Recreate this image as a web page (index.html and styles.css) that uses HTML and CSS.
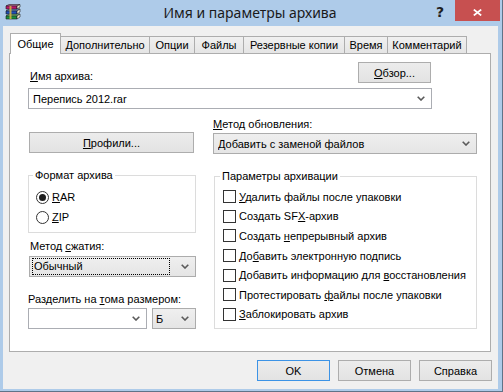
FILE: index.html
```html
<!DOCTYPE html>
<html lang="ru">
<head>
<meta charset="utf-8">
<title>Имя и параметры архива</title>
<link rel="stylesheet" href="styles.css">
</head>
<body>
<div class="window">
  <div class="titlebar">
    <div class="tb-left">
      <svg class="appicon" width="16" height="16" viewBox="0 0 16 16">
        <g stroke="#1c1c1c" stroke-width="0.6" stroke-linejoin="round">
          <path d="M1 12 L4 10 L15 10 L12 12 Z" fill="#86d98c"/>
          <rect x="1" y="12" width="11" height="3" fill="#17903b"/>
          <path d="M12 12 L15 10 L15 13 L12 15 Z" fill="#f4ecd0"/>
          <path d="M1 7 L4 5 L15 5 L12 7 Z" fill="#7fa6ea"/>
          <rect x="1" y="7" width="11" height="3" fill="#1e4fb8"/>
          <path d="M12 7 L15 5 L15 8 L12 10 Z" fill="#f4ecd0"/>
          <path d="M1 2 L4 0.5 L15 0.5 L12 2 Z" fill="#ee86c0"/>
          <rect x="1" y="2" width="11" height="3" fill="#b8186f"/>
          <path d="M12 2 L15 0.5 L15 3 L12 5 Z" fill="#f4ecd0"/>
        </g>
        <rect x="4.5" y="2" width="2" height="13" fill="#d8b640" opacity="0.85"/>
      </svg>
    </div>
    <div class="title">Имя и параметры архива</div>
    <div class="tb-right">
      <span class="help">?</span>
      <span class="close">
        <svg width="9" height="7" viewBox="0 0 9 7"><path d="M0.8 0.6 L8.2 6.4 M8.2 0.6 L0.8 6.4" stroke="#fff" stroke-width="1.8"/></svg>
      </span>
    </div>
  </div>

  <div class="client">
    <div class="tabs">
      <div class="tab active tab-general">Общие</div>
      <div class="tab tab-advanced">Дополнительно</div>
      <div class="tab tab-options">Опции</div>
      <div class="tab tab-files">Файлы</div>
      <div class="tab tab-backup">Резервные копии</div>
      <div class="tab tab-time">Время</div>
      <div class="tab tab-comment">Комментарий</div>
    </div>

    <div class="panel">
      <div class="name-row">
        <span class="lbl lbl-name"><u>И</u>мя архива:</span>
        <span class="btn btn-browse"><u>О</u>бзор...</span>
      </div>
      <div class="combo edit combo-name">
        <span class="val">Перепись 2012.rar</span>
        <svg class="arrow" width="8" height="5" viewBox="0 0 8 5"><path d="M0.7 0.7 L4 4 L7.3 0.7" fill="none" stroke="#5a5a5a" stroke-width="1.6"/></svg>
      </div>

      <div class="cols">
        <div class="col col-left">
          <span class="btn btn-profiles"><u>П</u>рофили...</span>

          <fieldset class="group group-format">
            <legend>Формат архива</legend>
            <div class="opt"><span class="radio checked"></span><span><u>R</u>AR</span></div>
            <div class="opt"><span class="radio"></span><span><u>Z</u>IP</span></div>
          </fieldset>

          <span class="lbl lbl-method">Метод <u>с</u>жатия:</span>
          <div class="combo list combo-method">
            <span class="val focus">Обычный</span>
            <svg class="arrow" width="8" height="5" viewBox="0 0 8 5"><path d="M0.7 0.7 L4 4 L7.3 0.7" fill="none" stroke="#5a5a5a" stroke-width="1.6"/></svg>
          </div>

          <span class="lbl lbl-split">Разделить на <u>т</u>ома размером:</span>
          <div class="split-row">
            <div class="combo edit combo-size">
              <span class="val"></span>
              <svg class="arrow" width="8" height="5" viewBox="0 0 8 5"><path d="M0.7 0.7 L4 4 L7.3 0.7" fill="none" stroke="#5a5a5a" stroke-width="1.6"/></svg>
            </div>
            <div class="combo list combo-unit">
              <span class="val">Б</span>
              <svg class="arrow" width="8" height="5" viewBox="0 0 8 5"><path d="M0.7 0.7 L4 4 L7.3 0.7" fill="none" stroke="#5a5a5a" stroke-width="1.6"/></svg>
            </div>
          </div>
        </div>

        <div class="col col-right">
          <span class="lbl lbl-update"><u>М</u>етод обновления:</span>
          <div class="combo list combo-update">
            <span class="val">Добавить с заменой файлов</span>
            <svg class="arrow" width="8" height="5" viewBox="0 0 8 5"><path d="M0.7 0.7 L4 4 L7.3 0.7" fill="none" stroke="#5a5a5a" stroke-width="1.6"/></svg>
          </div>

          <fieldset class="group group-params">
            <legend>Параметры архивации</legend>
            <div class="opt chk"><span class="box"></span><span><u>У</u>далить файлы после упаковки</span></div>
            <div class="opt chk"><span class="box"></span><span>Создать SF<u>X</u>-архив</span></div>
            <div class="opt chk"><span class="box"></span><span>Создать <u>н</u>епрерывный архив</span></div>
            <div class="opt chk"><span class="box"></span><span>До<u>б</u>авить электронную подпись</span></div>
            <div class="opt chk"><span class="box"></span><span>Добавить информацию для <u>в</u>осстановления</span></div>
            <div class="opt chk"><span class="box"></span><span>Протестировать <u>ф</u>айлы после упаковки</span></div>
            <div class="opt chk"><span class="box"></span><span><u>З</u>аблокировать архив</span></div>
          </fieldset>
        </div>
      </div>
    </div>

    <div class="footer">
      <span class="btn btn-foot default">OK</span>
      <span class="btn btn-foot">Отмена</span>
      <span class="btn btn-foot">Справка</span>
    </div>
  </div>
</div>
</body>
</html>
```

FILE: styles.css
```css
* { box-sizing: border-box; }

html, body {
  margin: 0;
  padding: 0;
}

body {
  width: 503px;
  height: 392px;
  overflow: hidden;
  background: #aecbe9;
  font-family: "Liberation Sans", Arial, sans-serif;
  font-size: 11px;
  color: #000;
}

.window {
  width: 503px;
  height: 392px;
  display: flex;
  flex-direction: column;
  border-right: 1px solid #5f7388;
  border-bottom: 1px solid #5f7388;
}

/* ---------- title bar ---------- */
.titlebar {
  height: 26px;
  flex: none;
  display: grid;
  grid-template-columns: 1fr auto 1fr;
  align-items: start;
  margin-right: 2px;
}

.tb-left {
  padding: 4px 0 0 5px;
}

.appicon { display: block; }

.title {
  font-family: "Noto Sans", "Open Sans", sans-serif;
  font-size: 14px;
  line-height: 26px;
  color: #1a1a1a;
  white-space: nowrap;
}

.tb-right {
  display: flex;
  justify-content: flex-end;
  align-items: flex-start;
}

.help {
  width: 26px;
  padding-right: 4px;
  height: 21px;
  text-align: center;
  font-family: "DejaVu Sans", sans-serif;
  font-weight: bold;
  font-size: 14px;
  line-height: 24px;
  color: #1f1f1f;
}

.close {
  width: 45px;
  height: 21px;
  background: #c75050;
  display: flex;
  justify-content: center;
  padding-top: 9px;
}

.close svg { display: block; }

/* ---------- client ---------- */
.client {
  flex: none;
  height: 363px;
  margin: 0 4px 0 3px;
  background: #f0f0f0;
  display: flex;
  flex-direction: column;
}

.tabs {
  height: 20px;
  margin: 7px 0 0 7px;
  display: flex;
  align-items: flex-end;
  position: relative;
  z-index: 2;
}

.tab {
  flex: none;
  height: 17px;
  margin-left: -1px;
  border: 1px solid #adadad;
  border-bottom: none;
  background: linear-gradient(#f0f0f0, #e5e5e5);
  line-height: 16px;
  text-align: center;
  white-space: nowrap;
}

.tab.active {
  height: 21px;
  margin-left: 0;
  margin-bottom: -1px;
  padding-top: 2px;
  background: #fff;
  position: relative;
  z-index: 3;
}

.tab-general  { width: 51px; }
.tab-advanced { width: 90px; }
.tab-options  { width: 46px; }
.tab-files    { width: 50px; }
.tab-backup   { width: 102px; }
.tab-time     { width: 44px; }
.tab-comment  { width: 80px; }

.panel {
  width: 482px;
  height: 299px;
  margin-left: 6px;
  border: 1px solid #adadad;
  background: #fff;
  padding: 8px 0 0 18px;
  position: relative;
  z-index: 1;
}

.lbl {
  display: block;
  line-height: 14px;
  white-space: nowrap;
}

.name-row {
  width: 404px;
  display: flex;
  justify-content: space-between;
  align-items: flex-end;
}

.lbl-name { margin-left: 2px; }

/* ---------- buttons ---------- */
.btn {
  display: flex;
  align-items: center;
  justify-content: center;
  height: 21px;
  border: 1px solid #adadad;
  background: linear-gradient(#ececec, #e3e3e3);
  line-height: 14px;
  white-space: nowrap;
}

.btn-browse {
  width: 73px;
  margin-right: 1px;
}

.btn-profiles {
  width: 165px;
  margin-left: 1px;
}

.btn-foot { width: 73px; }

.btn.default { border-color: #3c93e6; }

/* ---------- combos ---------- */
.combo {
  height: 21px;
  display: flex;
  align-items: center;
  border: 1px solid #acacac;
  padding: 0 6px 0 4px;
}

.combo.edit {
  background: #fff;
  border-color: #abadb3;
}

.combo.list {
  background: linear-gradient(#efefef, #e5e5e5);
}

.combo .val {
  flex: 1;
  white-space: nowrap;
  overflow: hidden;
  line-height: 14px;
}

.combo .arrow {
  flex: none;
  display: block;
}

.combo-name {
  width: 404px;
  margin-top: 5px;
}

.cols {
  display: flex;
  margin-top: 8px;
}

.col {
  display: flex;
  flex-direction: column;
}

.col-left {
  width: 168px;
  padding-top: 15px;
}

.col-right {
  width: 264px;
  margin-left: 17px;
}

.combo-update {
  margin-top: 2px;
  width: 264px;
}

/* ---------- group boxes ---------- */
.group {
  margin: 0;
  border: 1px solid #dcdcdc;
  min-width: 0;
}

.group legend {
  padding: 0 2px;
  margin-left: -3px;
  line-height: 14px;
  white-space: nowrap;
}

.group-format {
  margin-top: 15px;
  width: 168px;
  padding: 5px 0 5px 7px;
}

.group-format .opt {
  height: 20px;
}

.group-params {
  margin: 15px 0 0 1px;
  width: 263px;
  padding: 4px 0 4px 8px;
}

.group-params .opt {
  height: 19.6px;
}

.opt {
  display: flex;
  align-items: center;
  gap: 3px;
  white-space: nowrap;
}

.radio {
  width: 13px;
  height: 13px;
  border: 1px solid #333;
  border-radius: 50%;
  background: #fff;
  display: flex;
  align-items: center;
  justify-content: center;
  flex: none;
}

.radio.checked::after {
  content: "";
  width: 7px;
  height: 7px;
  border-radius: 50%;
  background: #1e1e1e;
}

.box {
  width: 13px;
  height: 13px;
  border: 1px solid #333;
  background: #fff;
  flex: none;
}

.lbl-method {
  margin: 6px 0 0 2px;
}

.combo-method {
  margin: 3px 0 0 1px;
  width: 167px;
  padding-left: 2px;
}

.combo-method .val.focus {
  height: 17px;
  border: 1px dotted #000;
  padding-left: 1px;
  margin-right: 11px;
  line-height: 15px;
}

.lbl-split {
  margin-top: 15px;
}

.split-row {
  display: flex;
  gap: 5px;
  margin-top: 2px;
}

.combo-size { width: 119px; }

.combo-unit {
  width: 44px;
  padding-left: 3px;
}

/* ---------- footer ---------- */
.footer {
  display: flex;
  justify-content: flex-end;
  gap: 8px;
  margin-top: 8px;
  padding-right: 6px;
}
```
